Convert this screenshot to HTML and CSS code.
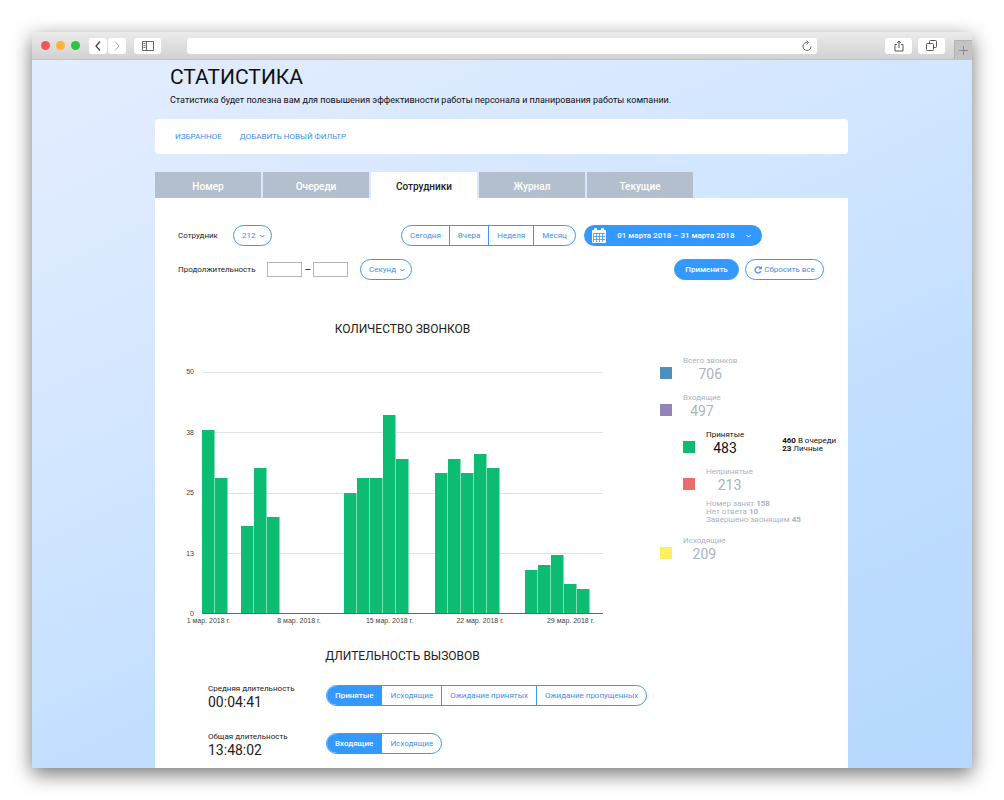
FILE: index.html
```html
<!DOCTYPE html>
<html lang="ru">
<head>
<meta charset="utf-8">
<title>Статистика</title>
<link rel="stylesheet" href="styles.css">
</head>
<body>
<div class="window">
  <header class="chrome">
    <div class="lights"><span class="light light-red"></span><span class="light light-amber"></span><span class="light light-green"></span></div>
    <div class="nav">
      <button class="key" aria-label="Назад"><svg width="10" height="12" viewBox="0 0 10 12"><path d="M7 1.500 3 6l4 4.500" fill="none" stroke="#444" stroke-width="1.300"/></svg></button>
      <button class="key" aria-label="Вперёд"><svg width="10" height="12" viewBox="0 0 10 12"><path d="M3 1.500 7 6l-4 4.500" fill="none" stroke="#aaa"/></svg></button>
    </div>
    <button class="key key-wide" aria-label="Боковая панель"><svg width="12" height="10" viewBox="0 0 12 10"><path d="M.5.5h11v9H.5zM4.500.5v9M1.500 2.500h2M1.500 4.500h2M1.500 6.500h2" fill="none" stroke="#666"/></svg></button>
    <div class="address">
      <input class="address-input" type="text" aria-label="Адрес">
      <button class="reload" aria-label="Обновить"><svg width="10" height="12" viewBox="0 0 10 12"><path d="M5.500 2.500A4 4 0 1 0 9 6.500M4.500.5l2 2-2 2" fill="none" stroke="#666"/></svg></button>
    </div>
    <div class="tools">
      <button class="key key-wide" aria-label="Поделиться"><svg width="10" height="12" viewBox="0 0 10 12"><path d="M3 4.500H1v6.500h8V4.500H7M5 8V1M3 3l2-2 2 2" fill="none" stroke="#555"/></svg></button>
      <button class="key key-wide" aria-label="Вкладки"><svg width="11" height="11" viewBox="0 0 11 11"><rect x=".5" y="3.500" width="7" height="7" rx="1" fill="none" stroke="#555"/><path d="M3.500 3.500v-2a1 1 0 0 1 1-1h5a1 1 0 0 1 1 1v5a1 1 0 0 1-1 1h-2" fill="none" stroke="#555"/></svg></button>
    </div>
    <button class="new-tab" aria-label="Новая вкладка"><svg width="9" height="9" viewBox="0 0 9 9"><path d="M4.500 0v9M0 4.500h9" stroke="#8a8a8a"/></svg></button>
  </header>

  <main class="page">
    <div class="intro">
      <h1 class="title">СТАТИСТИКА</h1>
      <p class="lead">Статистика будет полезна вам для повышения эффективности работы персонала и планирования работы компании.</p>
    </div>
    <nav class="links"><a href="#">ИЗБРАННОЕ</a><a href="#">ДОБАВИТЬ НОВЫЙ ФИЛЬТР</a></nav>
    <div class="tabs">
      <button class="tab">Номер</button><button class="tab">Очереди</button><button class="tab tab-active">Сотрудники</button><button class="tab">Журнал</button><button class="tab">Текущие</button>
    </div>

    <section class="panel">
      <form class="filters">
        <div class="row">
          <div class="field field-first">
            <label for="employee">Сотрудник</label>
            <span class="pick pick-short"><select id="employee"><option>212</option></select><svg class="caret" width="5" height="4" viewBox="0 0 5 4"><path d="M.5 1l2 2 2-2" fill="none" stroke="currentColor"/></svg></span>
          </div>
          <div class="period">
            <div class="segments"><button type="button">Сегодня</button><button type="button">Вчера</button><button type="button">Неделя</button><button type="button">Месяц</button></div>
            <button type="button" class="range">
              <svg width="14" height="15" viewBox="0 0 14 15"><rect y="2" width="14" height="13" rx="1" fill="#fff"/><rect x="2" width="3" height="4" rx="1" fill="#fff"/><rect x="9" width="3" height="4" rx="1" fill="#fff"/><path d="M1 5.500h12M1 8.500h12M1 11.500h12M1.500 5v9M4.500 5v9M7.500 5v9M10.500 5v9" stroke="#3399ff" stroke-width=".8"/></svg>
              <span>01 марта 2018 – 31 марта 2018</span>
              <svg width="5" height="4" viewBox="0 0 5 4"><path d="M.5 1l2 2 2-2" fill="none" stroke="currentColor"/></svg>
            </button>
          </div>
        </div>
        <div class="row">
          <div class="field">
            <label for="from">Продолжительность</label>
            <span class="span"><input id="from" type="text"><span>–</span><input type="text" aria-label="Продолжительность до"></span>
            <span class="pick"><select aria-label="Единица"><option>Секунд</option></select><svg class="caret" width="5" height="4" viewBox="0 0 5 4"><path d="M.5 1l2 2 2-2" fill="none" stroke="currentColor"/></svg></span>
          </div>
          <div class="actions">
            <button type="button" class="pill pill-solid">Применить</button>
            <button type="button" class="pill"><svg width="8" height="8" viewBox="0 0 8 8"><path d="M6.500 2.200A3 3 0 1 0 6.800 5.200" fill="none" stroke="currentColor" stroke-width="1.300"/><path d="M7.800 0v3.300H4.500z" fill="currentColor"/></svg>Сбросить все</button>
          </div>
        </div>
      </form>

      <div class="report">
        <div class="chart">
          <h2 class="heading">КОЛИЧЕСТВО ЗВОНКОВ</h2>
          <div class="y-axis"><span>50</span><span>38</span><span>25</span><span>13</span><span>0</span></div>
          <div class="lines"><i></i><i></i><i></i><i></i><i></i></div>
          <div class="bars">
            <b style="height:76%"></b><b style="height:56%"></b><b style="height:0"></b><b style="height:36%"></b><b style="height:60%"></b><b style="height:40%"></b><b style="height:0"></b><b style="height:0"></b><b style="height:0"></b><b style="height:0"></b><b style="height:0"></b><b style="height:50%"></b><b style="height:56%"></b><b style="height:56%"></b><b style="height:82%"></b><b style="height:64%"></b><b style="height:0"></b><b style="height:0"></b><b style="height:58%"></b><b style="height:64%"></b><b style="height:58%"></b><b style="height:66%"></b><b style="height:60%"></b><b style="height:0"></b><b style="height:0"></b><b style="height:18%"></b><b style="height:20%"></b><b style="height:24%"></b><b style="height:12%"></b><b style="height:10%"></b><b style="height:0"></b>
          </div>
          <div class="x-axis"><span class="day-1">1 мар. 2018 г.</span><span class="day-8">8 мар. 2018 г.</span><span class="day-15">15 мар. 2018 г.</span><span class="day-22">22 мар. 2018 г.</span><span class="day-29">29 мар. 2018 г.</span></div>
        </div>

        <div class="legend">
          <div class="item"><span class="swatch blue"></span><div class="count"><span>Всего звонков</span><strong>706</strong></div></div>
          <div class="item"><span class="swatch violet"></span><div class="count"><span>Входящие</span><strong>497</strong></div></div>
          <div class="item item-sub item-active"><span class="swatch green"></span><div class="count"><span>Принятые</span><strong>483</strong></div><div class="split"><div><b>460</b> В очереди</div><div><b>23</b> Личные</div></div></div>
          <div class="item item-sub"><span class="swatch red"></span><div class="count"><span>Непринятые</span><strong>213</strong></div></div>
          <div class="reasons"><div>Номер занят <b>158</b></div><div>Нет ответа <b>10</b></div><div>Завершено звонящим <b>45</b></div></div>
          <div class="item"><span class="swatch yellow"></span><div class="count"><span>Исходящие</span><strong>209</strong></div></div>
        </div>
      </div>

      <div class="durations">
        <h2 class="heading heading-durations">ДЛИТЕЛЬНОСТЬ ВЫЗОВОВ</h2>
        <div class="duration">
          <div class="measure"><span>Средняя длительность</span><strong>00:04:41</strong></div>
          <div class="segments"><button class="on">Принятые</button><button>Исходящие</button><button>Ожидание принятых</button><button>Ожидание пропущенных</button></div>
        </div>
        <div class="duration">
          <div class="measure"><span>Общая длительность</span><strong>13:48:02</strong></div>
          <div class="segments"><button class="on">Входящие</button><button>Исходящие</button></div>
        </div>
      </div>
    </section>
  </main>
</div>
</body>
</html>
```
FILE: styles.css
```css
* { box-sizing: border-box; }

body {
  margin: 0;
  padding: 32px;
  background: #fff;
  color: #222;
  font-family: Roboto, "Liberation Sans", sans-serif;
  font-size: 8px;
}

button, input, select {
  margin: 0;
  padding: 0;
  border: 0;
  background: none;
  color: inherit;
  font: inherit;
}

h1, h2, p { margin: 0; font-weight: 400; }

.window {
  min-height: calc(100vh - 64px);
  display: flex;
  flex-direction: column;
  overflow: hidden;
  border-radius: 4px 4px 0 0;
  background: linear-gradient(155deg, #e4eeff 0%, #e0ebff 12%, #d2e6ff 40%, #c0deff 68%, #b6d8fe 100%);
  box-shadow: 0 6px 20px rgba(0, 0, 0, .55);
}

/* Browser bar */
.chrome {
  display: flex;
  align-items: center;
  height: 28px;
  padding-left: 9px;
  background: linear-gradient(#ebebeb, #d2d2d2);
  border-bottom: 1px solid #c2c2c4;
}
.lights { display: flex; gap: 6px; margin-right: 9px; }
.light { width: 9px; height: 9px; border-radius: 50%; }
.light-red { background: #f4555a; }
.light-amber { background: #fdb436; }
.light-green { background: #2fc440; }
.nav { display: flex; gap: 1px; margin-right: 8px; }
.key {
  display: grid;
  place-items: center;
  width: 18px;
  height: 16px;
  border-radius: 3px;
  background: #fff;
}
.key-wide { width: 27px; }
.address { flex: 1; display: flex; margin: 0 68px 0 26px; height: 16px; padding-right: 5px; border-radius: 3px; background: #fff; }
.address-input { flex: 1; min-width: 0; }
.reload { display: grid; place-items: center; }
.tools { display: flex; gap: 6px; margin-right: 9px; }
.new-tab { display: grid; place-items: center; align-self: flex-end; width: 18px; height: 19px; background: #c3c3c3; border: solid #b2b2b2; border-width: 1px 0 0 1px; }

/* Page */
.page { flex: 1; display: flex; flex-direction: column; padding: 0 124px 0 123px; }
.intro { padding: 5px 15px 12px; color: #111; }
.title { font-size: 21px; line-height: 24px; }
.lead { padding-top: 4px; font-size: 9px; line-height: 14px; }
.links {
  display: flex;
  gap: 18px;
  padding: 12px 20px;
  border-radius: 4px;
  background: #fff;
  line-height: 11px;
}
.links a { color: #3c8fee; text-decoration: none; }
.tabs { display: flex; gap: 2px; margin-top: 18px; }
.tab { width: 106px; height: 26px; padding-top: 2px; background: #b3bfcd; color: #fff; font-size: 10px; font-weight: 500; }
.tab-active { background: #fff; color: #222; }
.panel { flex: 1; padding: 27px 0 11px 23px; background: #fff; }

/* Filters */
.filters { display: grid; gap: 13px; padding-right: 24px; }
.row { display: flex; align-items: center; height: 21px; }
.field { display: flex; align-items: center; }
.field-first { width: 223px; }
.field-first label { width: 55px; }
.pick {
  display: grid;
  align-items: center;
  height: 21px;
  width: 52px;
  border: 1px solid #3c97f5;
  border-radius: 11px;
  color: #3c8fee;
}
.pick-short { width: 39px; }
.pick select { grid-area: 1 / 1; appearance: none; padding-left: 8px; }
.pick .caret { grid-area: 1 / 1; justify-self: end; margin-right: 6px; pointer-events: none; }
.span { display: flex; align-items: center; gap: 2px; margin: 0 12px; font-size: 10px; }
.span input { width: 35px; height: 15px; border: 1px solid #b4b4bc; }
.period { display: flex; gap: 8px; }
.segments { display: flex; height: 21px; overflow: hidden; border: 1px solid #3c97f5; border-radius: 11px; color: #3c8fee; }
.segments button { padding: 0 8px; white-space: nowrap; }
.segments button + button { border-left: 1px solid #3c97f5; }
.segments .on { background: #3399ff; color: #fff; font-weight: 500; }
.range {
  display: flex;
  align-items: center;
  justify-content: space-between;
  width: 178px;
  height: 21px;
  padding: 0 11px 0 8px;
  border-radius: 11px;
  background: #3399ff;
  color: #fff;
  font-weight: 500;
}
.actions { display: flex; gap: 6px; margin-left: auto; }
.pill { display: flex; align-items: center; justify-content: center; gap: 2px; width: 79px; height: 21px; border: 1px solid #3c97f5; border-radius: 11px; color: #3c8fee; }
.pill-solid { width: 65px; background: #3399ff; color: #fff; font-weight: 500; }

/* Chart */
.report { display: flex; gap: 57px; padding-top: 39px; }
.heading { font-size: 12px; line-height: 20px; text-align: center; }
.chart {
  flex: 1;
  display: grid;
  grid-template-columns: 16px 1fr;
  grid-template-rows: 53px 242px 10px;
  column-gap: 8px;
}
.chart .heading { grid-column: 2; }
.y-axis, .lines, .bars { grid-row: 2; }
.y-axis { grid-column: 1; display: flex; flex-direction: column; justify-content: space-between; text-align: right; line-height: 0; color: #444; }
.lines { grid-column: 2; display: flex; flex-direction: column; justify-content: space-between; }
.lines i { height: 1px; background: #e2e2e2; }
.lines i:last-child { background: #666; }
.bars { grid-column: 2; display: flex; align-items: flex-end; margin-bottom: 1px; }
.bars b { flex: 1; background: #0cbc72; border-right: 1px solid #7fe0b4; }
.x-axis { grid-column: 2; display: grid; grid-template-columns: repeat(31, 1fr); padding-top: 3px; color: #444; line-height: 8px; }
.x-axis span { grid-row: 1; width: 0; justify-self: center; display: flex; justify-content: center; white-space: nowrap; }
.y-axis, .x-axis { font-family: "Liberation Sans", sans-serif; font-size: 7px; }
.day-1 { grid-column: 1; }
.day-8 { grid-column: 8; }
.day-15 { grid-column: 15; }
.day-22 { grid-column: 22; }
.day-29 { grid-column: 29; }

/* Legend */
.legend { width: 188px; padding-top: 37px; color: #a9b3c1; }
.item { display: flex; gap: 11px; margin-bottom: 11px; }
.item-sub { padding-left: 23px; }
.item-active { color: #111; }
.swatch { align-self: flex-end; width: 12px; height: 12px; margin-bottom: 3px; }
.blue { background: #4f8fbd; }
.violet { background: #9384b8; }
.green { background: #0cbc72; }
.red { background: #ea6c6c; }
.yellow { background: #fcf160; }
.count { display: flex; flex-direction: column; align-items: center; line-height: 9px; }
.count strong { padding-top: 1px; font-size: 14px; line-height: 16px; font-weight: 400; }
.split { align-self: flex-end; margin: 0 0 3px 27px; line-height: 8px; white-space: nowrap; }
.split b, .reasons b { font-weight: 700; }
.reasons { padding-left: 46px; margin: -4px 0 12px; line-height: 8px; }

/* Durations */
.durations { padding-top: 22px; }
.heading-durations { margin-right: 245px; padding-left: 24px; }
.duration { display: flex; align-items: center; margin-top: 18px; padding-left: 30px; height: 23px; }
.duration + .duration { margin-top: 25px; }
.measure { width: 118px; padding-top: 2px; line-height: 9px; }
.measure span { display: block; }
.measure strong { display: block; padding-top: 1px; font-size: 14px; line-height: 16px; font-weight: 400; }
```
